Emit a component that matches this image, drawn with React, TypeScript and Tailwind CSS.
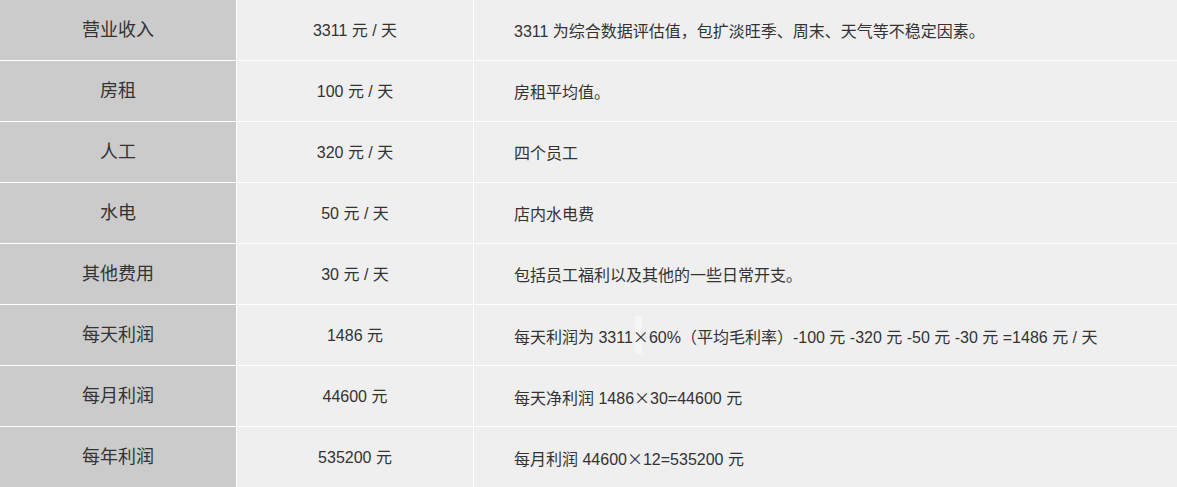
import React from "react";

const X = () => (
  <span style={{ fontFamily: '"Noto Sans CJK SC", sans-serif' }}>×</span>
);

const rows: [string, string, React.ReactNode][] = [
  ["营业收入", "3311 元 / 天", "3311 为综合数据评估值，包扩淡旺季、周末、天气等不稳定因素。"],
  ["房租", "100 元 / 天", "房租平均值。"],
  ["人工", "320 元 / 天", "四个员工"],
  ["水电", "50 元 / 天", "店内水电费"],
  ["其他费用", "30 元 / 天", "包括员工福利以及其他的一些日常开支。"],
  [
    "每天利润",
    "1486 元",
    <>每天利润为 3311<X />60%（平均毛利率）-100 元 -320 元 -50 元 -30 元 =1486 元 / 天</>,
  ],
  ["每月利润", "44600 元", <>每天净利润 1486<X />30=44600 元</>],
  ["每年利润", "535200 元", <>每月利润 44600<X />12=535200 元</>],
];

export default function App() {
  return (
    <div
      className="w-[1177px] h-[487px] bg-white flex flex-col gap-px overflow-hidden text-[#333333]"
      style={{ fontFamily: '"Liberation Sans", "Noto Sans CJK SC", sans-serif' }}
    >
      {rows.map((r, i) => (
        <div key={i} className="grid grid-cols-[236px_236px_1fr] gap-x-px h-[60px] shrink-0">
          <div className="bg-[#cbcbcb] flex items-center justify-center text-[18px]">{r[0]}</div>
          <div className="bg-[#efefef] flex items-center justify-center text-[16px] pt-[2px]">{r[1]}</div>
          <div className="bg-[#efefef] flex items-center pl-[40px] text-[16px] pt-[4px] relative">
            {i === 5 && (
              <div className="absolute left-[161px] top-[11px] w-[7px] h-[38px] bg-[#f6f6f6]" />
            )}
            <span className="relative">{r[2]}</span>
          </div>
        </div>
      ))}
    </div>
  );
}
